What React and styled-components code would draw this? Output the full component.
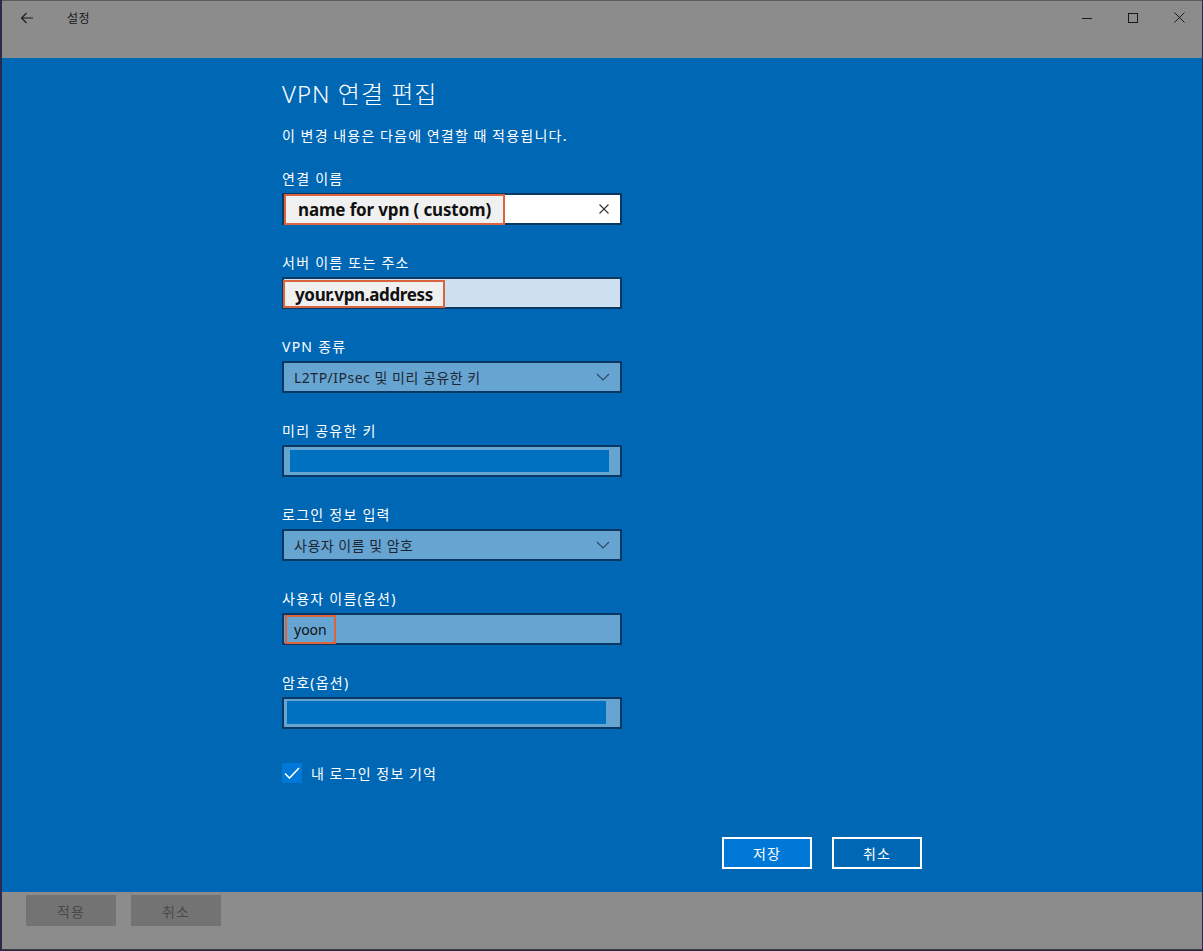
import styled, { createGlobalStyle } from 'styled-components';

const GlobalStyle = createGlobalStyle`
	html, body {
		margin: 0;
		padding: 0;
	}
	body {
		background: #2c2a4a;
		font-family: "Noto Sans", "Noto Sans CJK KR", sans-serif;
	}
`;

const Window = styled.div`
	width: 1200px;
	height: 950px;
	margin-left: 2px;
	background: #8c8c8c;
	display: flex;
	flex-direction: column;
`;

const TitleBar = styled.div`
	height: 58px;
	display: flex;
	align-items: flex-start;
	box-sizing: border-box;
	border-top: 1px solid #5c5c5c;
`;

const TitleRow = styled.div`
	height: 33px;
	display: flex;
	align-items: center;
	flex: 1;
`;

const BackButton = styled.div`
	width: 48px;
	padding-left: 18px;
	box-sizing: border-box;
	display: flex;
	align-items: center;
	color: #1a1a1a;
`;

const AppName = styled.span`
	margin-left: 17px;
	font-family: "Noto Sans CJK KR", sans-serif;
	font-size: 12px;
	color: #1a1a1a;
	letter-spacing: 0.5px;
`;

const Controls = styled.div`
	margin-left: auto;
	display: flex;
`;

const ControlButton = styled.div`
	width: 46px;
	height: 33px;
	display: flex;
	align-items: center;
	justify-content: center;
	color: #1a1a1a;
`;

const Panel = styled.div`
	height: 834px;
	background: #0067b4;
	box-sizing: border-box;
	padding: 19px 0 0 280px;
`;

const Content = styled.div`
	width: 640px;
	color: #fff;
`;

const Title = styled.h1`
	margin: 0;
	font-family: "Noto Sans", "Noto Sans CJK KR", sans-serif;
	font-weight: 300;
	font-size: 24px;
	line-height: 34px;
	letter-spacing: 1px;
`;

const Subtitle = styled.p`
	margin: 14px 0 24px;
	font-family: "Noto Sans CJK KR", sans-serif;
	font-size: 14px;
	line-height: 20px;
	letter-spacing: 1.25px;
`;

const Field = styled.div`
	margin-bottom: 28px;
`;

const Label = styled.div`
	font-family: "Noto Sans", "Noto Sans CJK KR", sans-serif;
	font-size: 14px;
	line-height: 20px;
	margin-bottom: 4px;
	letter-spacing: 1.25px;
`;

const Box = styled.div`
	width: 340px;
	height: 32px;
	box-sizing: border-box;
	border: 2px solid #0b3862;
	background: ${p => p.$bg || '#66a4d2'};
	display: flex;
	align-items: stretch;
	color: #1b1b1b;
	font-size: 14px;
	font-family: "Noto Sans", "Noto Sans CJK KR", sans-serif;
`;

const Marked = styled.span`
	box-sizing: border-box;
	margin: ${p => p.$margin || '-1px 0 -1px 0'};
	border: 2px solid #d9643e;
	background: ${p => p.$bg || 'transparent'};
	padding: 0 ${p => p.$pad || '12px'};
	display: flex;
	align-items: center;
	font-weight: ${p => (p.$bold ? 700 : 400)};
	font-size: ${p => (p.$bold ? '17px' : '14px')};
	letter-spacing: ${p => p.$spacing || '0'};
	color: #111;
	white-space: nowrap;
`;

const ClearIcon = styled.span`
	margin-left: auto;
	width: 32px;
	display: flex;
	align-items: center;
	justify-content: center;
	color: #333;
`;

const SelectText = styled.span`
	display: flex;
	align-items: center;
	padding-left: 10px;
	flex: 1;
	letter-spacing: 0.5px;
	color: #1d2733;
`;

const Chevron = styled.span`
	width: 34px;
	display: flex;
	align-items: center;
	justify-content: center;
	color: #2b4a6a;
`;

const SelectionBar = styled.span`
	flex: 1;
	margin: ${p => p.$margin};
	background: #0070c1;
`;

const CheckRow = styled.label`
	display: flex;
	align-items: center;
	gap: 9px;
	margin-top: 34px;
	font-family: "Noto Sans CJK KR", sans-serif;
	font-size: 14px;
	line-height: 20px;
	letter-spacing: 1.25px;
`;

const CheckBox = styled.span`
	width: 20px;
	height: 20px;
	background: #0078d7;
	display: flex;
	align-items: center;
	justify-content: center;
`;

const Actions = styled.div`
	display: flex;
	justify-content: flex-end;
	gap: 20px;
	margin-top: 54px;
`;

const DialogButton = styled.button`
	width: 90px;
	height: 32px;
	box-sizing: border-box;
	border: 2px solid #fff;
	background: ${p => (p.$primary ? '#0078d7' : 'transparent')};
	color: #fff;
	font-family: "Noto Sans CJK KR", sans-serif;
	font-size: 14px;
	letter-spacing: 1px;
	padding: 0;
`;

const Footer = styled.div`
	height: 58px;
	display: flex;
	gap: 15px;
	padding: 3px 0 0 24px;
	box-sizing: border-box;
	border-bottom: 1px solid #3a3a3a;
`;

const FooterButton = styled.div`
	width: 90px;
	height: 31px;
	background: #737373;
	color: #4a4a4a;
	font-family: "Noto Sans CJK KR", sans-serif;
	font-size: 14px;
	letter-spacing: 1px;
	display: flex;
	align-items: center;
	justify-content: center;
`;

const Down = () => (
	<svg width="14" height="8" viewBox="0 0 14 8" fill="none" stroke="currentColor" strokeWidth="1.2">
		<path d="M1 1l6 6 6-6" />
	</svg>
);

const App = () => {
	return (
		<>
			<GlobalStyle />
			<Window>
				<TitleBar>
					<TitleRow>
						<BackButton>
							<svg width="14" height="12" viewBox="0 0 14 12" fill="none" stroke="currentColor" strokeWidth="1.1">
								<path d="M13 6H1.5M6.5 1L1.5 6l5 5" />
							</svg>
						</BackButton>
						<AppName>설정</AppName>
						<Controls>
							<ControlButton>
								<svg width="10" height="10" viewBox="0 0 10 10" stroke="currentColor" strokeWidth="1">
									<path d="M0 5.5h10" />
								</svg>
							</ControlButton>
							<ControlButton>
								<svg width="10" height="10" viewBox="0 0 10 10" fill="none" stroke="currentColor" strokeWidth="1">
									<rect x="0.5" y="0.5" width="9" height="9" />
								</svg>
							</ControlButton>
							<ControlButton>
								<svg width="11" height="11" viewBox="0 0 11 11" stroke="currentColor" strokeWidth="1">
									<path d="M0.5 0.5l10 10M10.5 0.5l-10 10" />
								</svg>
							</ControlButton>
						</Controls>
					</TitleRow>
				</TitleBar>

				<Panel>
					<Content>
						<Title>VPN 연결 편집</Title>
						<Subtitle>이 변경 내용은 다음에 연결할 때 적용됩니다.</Subtitle>

						<Field>
							<Label>연결 이름</Label>
							<Box $bg="#fff">
								<Marked $bold $bg="#f0f0f0" $spacing="-0.15px" $margin="-1px 0 -2px 0">name for vpn ( custom)</Marked>
								<ClearIcon>
									<svg width="10" height="10" viewBox="0 0 10 10" stroke="currentColor" strokeWidth="1.1">
										<path d="M0.5 0.5l9 9M9.5 0.5l-9 9" />
									</svg>
								</ClearIcon>
							</Box>
						</Field>

						<Field>
							<Label>서버 이름 또는 주소</Label>
							<Box $bg="#cde0ef">
								<Marked $bold $bg="#f0f0f0" $spacing="-0.35px" $pad="10px" $margin="1px 0 -1px -1px">your.vpn.address</Marked>
							</Box>
						</Field>

						<Field>
							<Label>VPN 종류</Label>
							<Box>
								<SelectText>L2TP/IPsec 및 미리 공유한 키</SelectText>
								<Chevron><Down /></Chevron>
							</Box>
						</Field>

						<Field>
							<Label>미리 공유한 키</Label>
							<Box>
								<SelectionBar $margin="3px 11px 3px 6px" />
							</Box>
						</Field>

						<Field>
							<Label>로그인 정보 입력</Label>
							<Box>
								<SelectText>사용자 이름 및 암호</SelectText>
								<Chevron><Down /></Chevron>
							</Box>
						</Field>

						<Field>
							<Label>사용자 이름(옵션)</Label>
							<Box>
								<Marked $pad="7px" $margin="0 0 -1px 1px">yoon</Marked>
							</Box>
						</Field>

						<Field>
							<Label>암호(옵션)</Label>
							<Box>
								<SelectionBar $margin="2px 14px 3px 3px" />
							</Box>
						</Field>

						<CheckRow>
							<CheckBox>
								<svg width="16" height="12" viewBox="0 0 16 12" fill="none" stroke="#fff" strokeWidth="1.6">
									<path d="M1 6.5l4.5 4.5L15 1" />
								</svg>
							</CheckBox>
							내 로그인 정보 기억
						</CheckRow>

						<Actions>
							<DialogButton $primary>저장</DialogButton>
							<DialogButton>취소</DialogButton>
						</Actions>
					</Content>
				</Panel>

				<Footer>
					<FooterButton>적용</FooterButton>
					<FooterButton>취소</FooterButton>
				</Footer>
			</Window>
		</>
	);
};

export default App;
